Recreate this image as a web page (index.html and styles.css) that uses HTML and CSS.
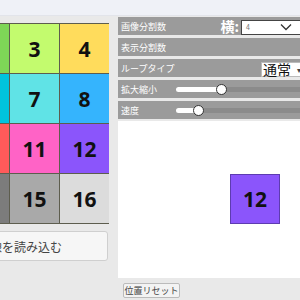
FILE: index.html
```html
<!DOCTYPE html>
<html lang="ja">
<head>
<meta charset="utf-8">
<link rel="stylesheet" href="styles.css">
</head>
<body>
<div class="topbar"></div>
<div class="main">
  <div class="left">
    <div class="grid">
      <div class="cell c1">1</div><div class="cell c2">2</div><div class="cell c3">3</div><div class="cell c4">4</div>
      <div class="cell c5">5</div><div class="cell c6">6</div><div class="cell c7">7</div><div class="cell c8">8</div>
      <div class="cell c9">9</div><div class="cell c10">10</div><div class="cell c11">11</div><div class="cell c12">12</div>
      <div class="cell c13">13</div><div class="cell c14">14</div><div class="cell c15">15</div><div class="cell c16">16</div>
    </div>
    <button class="load">画像を読み込む</button>
  </div>
  <div class="panel">
    <div class="row">
      <span class="label">画像分割数</span>
      <span class="yoko">横:</span>
      <div class="select sel-num"><span class="val">4</span><svg class="chev" width="12" height="8" viewBox="0 0 12 8"><path d="M1 1.5 L6 6.5 L11 1.5" fill="none" stroke="#333" stroke-width="1.3"/></svg></div>
    </div>
    <div class="row">
      <span class="label">表示分割数</span>
    </div>
    <div class="row">
      <span class="label">ループタイプ</span>
      <div class="select sel-loop">通常<span class="arrow">▾</span></div>
    </div>
    <div class="row">
      <span class="label">拡大縮小</span>
      <div class="slider"><div class="fill" style="width:46px"></div><div class="thumb"></div><div class="rest"></div></div>
    </div>
    <div class="row">
      <span class="label">速度</span>
      <div class="slider"><div class="fill" style="width:23px"></div><div class="thumb"></div><div class="rest"></div></div>
    </div>
    <div class="view">
      <div class="piece">12</div>
    </div>
    <div class="footer"><div class="reset">位置リセット</div></div>
  </div>
</div>
</body>
</html>
```
FILE: styles.css
```css
html, body {
  margin: 0;
  padding: 0;
  width: 300px;
  height: 300px;
  overflow: hidden;
  background: #e9e9e9;
  font-family: "Noto Sans CJK JP", "Noto Sans", sans-serif;
}
.topbar {
  height: 16px;
  background: #eff1f7;
  border-bottom: 1px solid #e2e4ea;
  box-sizing: border-box;
}
.main {
  display: flex;
  gap: 9px;
}
.left {
  width: 109px;
  flex: none;
}
.grid {
  display: grid;
  grid-template-columns: repeat(4, 49px);
  grid-auto-rows: 49px;
  gap: 1px;
  padding: 1px;
  background: #5d5d4e;
  width: 200px;
  box-sizing: border-box;
  margin: 7px 0 0 -91px;
}
.cell {
  display: flex;
  align-items: center;
  justify-content: center;
  font-family: "Noto Sans", sans-serif;
  font-weight: 700;
  font-size: 21px;
  color: #111;
}
.c1 { background: #e86a5a; }
.c2 { background: #7ed657; }
.c3 { background: #c3fb6e; }
.c4 { background: #ffdc5c; }
.c5 { background: #3cc2e0; }
.c6 { background: #00c3dd; }
.c7 { background: #60e3e6; }
.c8 { background: #35b4fd; }
.c9 { background: #ff9a5e; }
.c10 { background: #ff5a5a; }
.c11 { background: #ff63c6; }
.c12 { background: #8b55fb; }
.c13 { background: #555555; }
.c14 { background: #7c7c7c; }
.c15 { background: #a9a9a9; }
.c16 { background: #dcdcdc; }
.load {
  display: block;
  margin: 7px 0 0 -68px;
  width: 176px;
  height: 30px;
  background: #f6f6f6;
  border: 1px solid #cfcfcf;
  border-radius: 3px;
  font-family: "Noto Sans CJK JP", sans-serif;
  font-size: 12px;
  color: #444;
  padding: 0;
}
.panel {
  flex: 1;
  display: flex;
  flex-direction: column;
  gap: 3px;
  padding-top: 1px;
  min-width: 0;
}
.row {
  height: 18px;
  background: #9b9b9b;
  display: flex;
  align-items: center;
  position: relative;
  overflow: hidden;
  flex: none;
}
.label {
  color: #fff;
  font-size: 9px;
  padding-left: 3px;
  width: 52px;
  flex: none;
  white-space: nowrap;
}
.yoko {
  margin-left: auto;
  color: #fff;
  font-weight: 700;
  font-size: 14px;
  margin-right: 2px;
}
.select {
  background: #fff;
  box-sizing: border-box;
  display: flex;
  align-items: center;
  flex: none;
}
.sel-num {
  width: 62px;
  height: 15px;
  border: 1.5px solid #444;
  margin-right: -3px;
  padding-left: 4px;
  margin-top: 2px;
}
.sel-num .val {
  font-size: 7px;
  color: #777;
}
.sel-num .chev {
  margin-left: auto;
  margin-right: 10px;
}
.sel-loop {
  margin-left: auto;
  margin-right: -6px;
  width: 45px;
  height: 15px;
  margin-top: 2px;
  border: 1px solid #bbb;
  font-size: 14px;
  color: #111;
  padding-left: 1px;
  line-height: 15px;
}
.sel-loop .arrow {
  font-size: 8px;
  margin-left: 6px;
  color: #444;
}
.slider {
  flex: 1;
  display: flex;
  align-items: center;
  margin-left: 3px;
}
.fill {
  height: 5px;
  background: #fff;
  border-radius: 3px 0 0 3px;
  flex: none;
}
.thumb {
  width: 9px;
  height: 9px;
  border-radius: 50%;
  background: #fff;
  border: 1.5px solid #333;
  margin-left: -6px;
  flex: none;
  position: relative;
  z-index: 1;
}
.rest {
  flex: 1;
  height: 5px;
  background: #8b8b8b;
  margin-left: -6px;
}
.view {
  height: 157px;
  background: #fff;
  position: relative;
  margin-top: -1px;
  flex: none;
}
.piece {
  position: absolute;
  left: 112px;
  top: 53px;
  width: 50px;
  height: 50px;
  box-sizing: border-box;
  background: #8b55fb;
  border: 1px solid #5d3cb0;
  display: flex;
  align-items: center;
  justify-content: center;
  font-family: "Noto Sans", sans-serif;
  font-weight: 700;
  font-size: 21px;
  color: #111;
}
.footer {
  display: flex;
  padding-left: 5px;
  padding-top: 2px;
}
.reset {
  box-sizing: border-box;
  height: 15px;
  width: 57px;
  background: #f3f3f3;
  border: 1px solid #bbb;
  border-radius: 2px;
  font-size: 9px;
  color: #444;
  line-height: 13px;
  text-align: center;
}
```
